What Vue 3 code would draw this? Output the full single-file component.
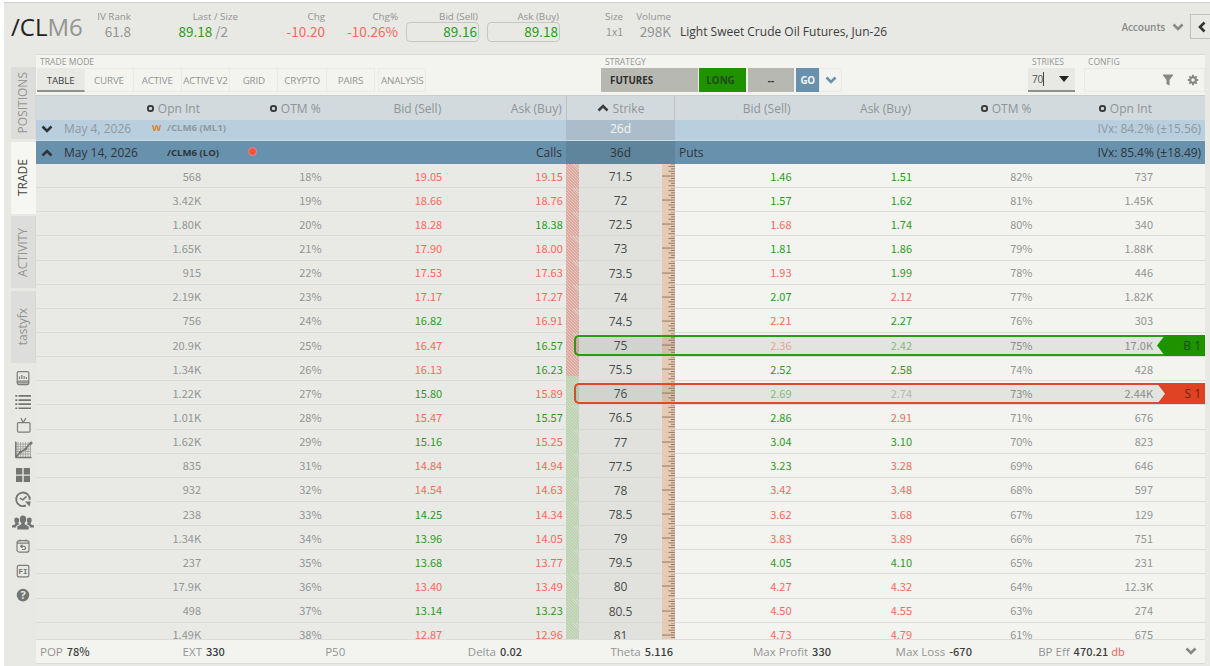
<template>
  <div class="app">
    <header class="quote-bar">
      <div class="symbol"><b>/CL</b>M6</div>
      <div v-for="q in quotes" :key="q.label" class="quote" :class="q.cls">
        <span class="quote-label">{{ q.label }}</span>
        <span class="quote-value" :class="q.tone">{{ q.value }}<i v-if="q.extra">{{ q.extra }}</i></span>
      </div>
      <div class="description">Light Sweet Crude Oil Futures, Jun-26</div>
      <div class="accounts">
        Accounts
        <svg class="chev" viewBox="0 0 12 8"><path d="M1.5 1.5L6 6l4.5-4.5" /></svg>
      </div>
      <button class="collapse">
        <svg viewBox="0 0 8 12"><path d="M6.5 1.5L2 6l4.5 4.5" /></svg>
      </button>
    </header>

    <div class="main">
      <nav class="rail">
        <div v-for="tab in railTabs" :key="tab" class="rail-tab" :class="{ active: tab === 'TRADE' }">
          <span>{{ tab }}</span>
        </div>
        <div class="rail-icons">
          <svg viewBox="0 0 24 24" class="line">
            <rect x="6.2" y="5.5" width="11.6" height="13" rx="1.5" />
            <path d="M6 15h12M6 16.8h12" />
            <path d="M8.5 12.8v-2.300M10.800 12.800V9M13.100 12.800v-3M15.400 12.800v-2" />
          </svg>
          <svg viewBox="0 0 24 24" class="solid">
            <path d="M4.300 5h2v1.700h-2zM4.300 9.100h2v1.700h-2zM4.300 13.200h2v1.700h-2zM4.300 17.300h2V19h-2zM7.500 5H20v1.700H7.500zM7.500 9.100H20v1.700H7.500zM7.500 13.200H20v1.700H7.500zM7.500 17.300H20V19H7.500z" />
          </svg>
          <svg viewBox="0 0 24 24" class="line">
            <rect x="6.500" y="8.500" width="12.500" height="9.500" rx="1" />
            <path d="M10 4l2 4.500L15 4" />
          </svg>
          <svg viewBox="0 0 24 24">
            <path class="thin" d="M7 4v15M9.500 4v15M12 4v15M14.500 4v15M17 4v15M19.500 4v15M5 6h15M5 8.500h15M5 11h15M5 13.500h15M5 16h15" />
            <path class="bold" d="M4.800 3.500v16h15.700M5.500 18.500l4-4.500 5-3 3-4L20 5" />
            <circle cx="20" cy="5" r="1.600" /><circle cx="9.500" cy="14" r="1.500" /><circle cx="14.500" cy="11" r="1.300" />
          </svg>
          <svg viewBox="0 0 24 24" class="solid">
            <path d="M5 5h6.300v6.300H5zM12.700 5H19v6.300h-6.300zM5 12.700h6.300V19H5zM12.700 12.700H19V19h-6.300z" />
          </svg>
          <svg viewBox="0 0 24 24">
            <path class="ring" d="M15 18.300A6.800 6.800 0 1 1 18.700 12.800" />
            <path class="bold" d="M8.800 11l3 1.800 3.700-3.500" />
            <path d="M14 14.500h5.700l-1.200 4.800z" />
          </svg>
          <svg viewBox="0 0 24 24" class="solid wide">
            <path d="M12 4.500c-2.200 0-3.200 1.300-3.200 3.400 0 2 .6 3.100 1.500 3.900v1.300L6.300 15.300V18.500h11.400v-3.200l-4-2.200v-1.300c.9-.8 1.500-1.900 1.500-3.900 0-2.100-1-3.400-3.200-3.400z" />
            <path d="M5.500 6.500c-1.500 0-2.200 1-2.200 2.500 0 1.400.4 2.200 1 2.800v1.400L1 14.500v2h4.200v-1.600L8.700 13l-1.500-.6v-.7c.6-.6 1-1.300 1-2.700 0-1.500-1.200-2.500-2.700-2.500z" />
            <path d="M18.500 6.500c1.500 0 2.200 1 2.200 2.500 0 1.400-.4 2.200-1 2.800v1.400l3.300 1.300v2h-4.200v-1.600L15.300 13l1.500-.6v-.7c-.6-.6-1-1.300-1-2.700 0-1.500 1.200-2.500 2.700-2.500z" />
          </svg>
          <svg viewBox="0 0 24 24" class="line">
            <rect x="6" y="5.500" width="12" height="11.500" rx="2.200" />
            <path d="M6 8h12M9 4.300v2M15 4.300v2M11.500 9.500l-2 1.700 2 1.700M9.500 11.200h3.500a1.600 1.600 0 0 1 0 3.200h-2" />
          </svg>
          <svg viewBox="0 0 24 24" class="line">
            <rect x="6.300" y="6.300" width="11.500" height="11.500" rx="1.300" />
            <text x="12.100" y="14.600" class="fi">FI</text>
          </svg>
          <svg viewBox="0 0 24 24">
            <circle cx="12" cy="12" r="6.300" />
            <text x="12" y="16" class="help">?</text>
          </svg>
        </div>
      </nav>

      <section class="panel">
        <div class="toolbar">
          <div class="group modes">
            <div class="group-label">TRADE MODE</div>
            <div class="group-body">
              <button v-for="m in modes" :key="m" class="mode" :class="{ active: m === 'TABLE', last: m === 'ANALYSIS' }">{{ m }}</button>
            </div>
          </div>
          <div class="group strategy">
            <div class="group-label">STRATEGY</div>
            <div class="group-body">
              <button class="strat futures">FUTURES</button>
              <button class="strat long">LONG</button>
              <button class="strat none">--</button>
              <button class="strat go">GO</button>
              <button class="strat more">
                <svg class="chev" viewBox="0 0 12 8"><path d="M1.5 1.5L6 6l4.5-4.5" /></svg>
              </button>
            </div>
          </div>
          <div class="group strikes">
            <div class="group-label">STRIKES</div>
            <div class="group-body select">
              <span>70</span><em class="caret"></em>
              <svg viewBox="0 0 10 6"><path d="M0 0h10L5 6z" /></svg>
            </div>
          </div>
          <div class="group config">
            <div class="group-label">CONFIG</div>
            <div class="group-body tools">
              <svg viewBox="0 0 12 12"><path d="M.5.5h11L7.5 6v5.5L4.500 10V6z" /></svg>
              <svg viewBox="0 0 14 14">
                <path d="M7 1v12M1 7h12M2.800 2.800l8.400 8.400M11.200 2.800l-8.400 8.400" class="teeth" />
                <circle cx="7" cy="7" r="3.300" class="gear" />
              </svg>
            </div>
          </div>
        </div>

        <div class="row head">
          <div class="side">
            <span><u></u>Opn Int</span><span><u></u>OTM %</span><span>Bid (Sell)</span><span>Ask (Buy)</span>
          </div>
          <div class="mid">
            <svg class="chev" viewBox="0 0 12 8"><path d="M1.5 6.5L6 2l4.5 4.5" /></svg>Strike
          </div>
          <div class="side">
            <span>Bid (Sell)</span><span>Ask (Buy)</span><span><u></u>OTM %</span><span><u></u>Opn Int</span>
          </div>
        </div>

        <div class="row expiry near">
          <div class="exp-left">
            <svg class="chev" viewBox="0 0 12 8"><path d="M1.5 1.5L6 6l4.5-4.5" /></svg>
            <span class="exp-date">May 4, 2026</span>
            <span class="exp-flag">W</span>
            <span class="exp-root">/CLM6 (ML1)</span>
          </div>
          <div class="mid">26d</div>
          <div class="exp-right"><span></span><span>IVx: 84.2% (±15.56)</span></div>
        </div>
        <div class="row expiry open">
          <div class="exp-left">
            <svg class="chev" viewBox="0 0 12 8"><path d="M1.5 6.5L6 2l4.5 4.5" /></svg>
            <span class="exp-date">May 14, 2026</span>
            <span class="exp-flag"></span>
            <span class="exp-root">/CLM6 (LO)</span>
            <span class="dot"></span>
            <span class="exp-side">Calls</span>
          </div>
          <div class="mid">36d</div>
          <div class="exp-right"><span>Puts</span><span>IVx: 85.4% (±18.49)</span></div>
        </div>

        <div class="chain">
          <div v-for="(r, i) in rows" :key="r.strike" class="row strike-row" :class="r.leg">
            <div class="side calls">
              <span>{{ r.call[0] }}</span>
              <span>{{ r.call[1] }}</span>
              <span :class="tone(r.colors[0])">{{ r.call[2] }}</span>
              <span :class="tone(r.colors[1])">{{ r.call[3] }}</span>
            </div>
            <div class="mid">
              <div class="hatch">
                <div class="itm" :class="{ part: i === 8, none: i > 8 }"></div>
                <div class="otm"></div>
              </div>
              <div class="strike">{{ r.strike }}</div>
              <svg class="ruler" viewBox="0 0 13 24.15" preserveAspectRatio="none">
                <path v-for="t in ticks" :key="t.y" :d="`M${t.x} ${t.y}H13`" />
              </svg>
            </div>
            <div class="side puts">
              <span :class="tone(r.colors[2])">{{ r.put[0] }}</span>
              <span :class="tone(r.colors[3])">{{ r.put[1] }}</span>
              <span>{{ r.put[2] }}</span>
              <span>{{ r.put[3] }}</span>
            </div>
            <div v-if="r.leg" class="leg">
              <div class="leg-tag">{{ r.leg === 'buy' ? 'B 1' : 'S 1' }}</div>
            </div>
          </div>
        </div>

        <footer class="stats">
          <div v-for="s in stats" :key="s.label" class="stat">
            {{ s.label }} <b>{{ s.value }}</b><i v-if="s.unit">{{ s.unit }}</i>
          </div>
          <svg class="chev" viewBox="0 0 12 8"><path d="M1.5 1.5L6 6l4.5-4.5" /></svg>
        </footer>
      </section>
    </div>
  </div>
</template>

<script setup>
const quotes = [
  { label: 'IV Rank', value: '61.8', cls: 'iv' },
  { label: 'Last / Size', value: '89.18', extra: '/2', cls: 'last', tone: 'up' },
  { label: 'Chg', value: '-10.20', cls: 'chg', tone: 'down' },
  { label: 'Chg%', value: '-10.26%', cls: 'pct', tone: 'down' },
  { label: 'Bid (Sell)', value: '89.16', cls: 'boxed', tone: 'up' },
  { label: 'Ask (Buy)', value: '89.18', cls: 'boxed', tone: 'up' },
  { label: 'Size', value: '1x1', cls: 'size' },
  { label: 'Volume', value: '298K', cls: 'volume' }
]

const railTabs = ['POSITIONS', 'TRADE', 'ACTIVITY', 'tastyfx']

const modes = ['TABLE', 'CURVE', 'ACTIVE', 'ACTIVE V2', 'GRID', 'CRYPTO', 'PAIRS', 'ANALYSIS']

// open int, otm, bid, ask | strike | bid, ask, otm, open int | price direction
const data = [
  ['568 18% 19.05 19.15', '71.5', '1.46 1.51 82% 737', 'dduu'],
  ['3.42K 19% 18.66 18.76', '72', '1.57 1.62 81% 1.45K', 'dduu'],
  ['1.80K 20% 18.28 18.38', '72.5', '1.68 1.74 80% 340', 'dudu'],
  ['1.65K 21% 17.90 18.00', '73', '1.81 1.86 79% 1.88K', 'dduu'],
  ['915 22% 17.53 17.63', '73.5', '1.93 1.99 78% 446', 'dddu'],
  ['2.19K 23% 17.17 17.27', '74', '2.07 2.12 77% 1.82K', 'ddud'],
  ['756 24% 16.82 16.91', '74.5', '2.21 2.27 76% 303', 'uddu'],
  ['20.9K 25% 16.47 16.57', '75', '2.36 2.42 75% 17.0K', 'dudu', 'buy'],
  ['1.34K 26% 16.13 16.23', '75.5', '2.52 2.58 74% 428', 'duuu'],
  ['1.22K 27% 15.80 15.89', '76', '2.69 2.74 73% 2.44K', 'udun', 'sell'],
  ['1.01K 28% 15.47 15.57', '76.5', '2.86 2.91 71% 676', 'duud'],
  ['1.62K 29% 15.16 15.25', '77', '3.04 3.10 70% 823', 'uduu'],
  ['835 31% 14.84 14.94', '77.5', '3.23 3.28 69% 646', 'ddud'],
  ['932 32% 14.54 14.63', '78', '3.42 3.48 68% 597', 'dddd'],
  ['238 33% 14.25 14.34', '78.5', '3.62 3.68 67% 129', 'uddd'],
  ['1.34K 34% 13.96 14.05', '79', '3.83 3.89 66% 751', 'uddd'],
  ['237 35% 13.68 13.77', '79.5', '4.05 4.10 65% 231', 'uduu'],
  ['17.9K 36% 13.40 13.49', '80', '4.27 4.32 64% 12.3K', 'dddd'],
  ['498 37% 13.14 13.23', '80.5', '4.50 4.55 63% 274', 'uudd'],
  ['1.49K 38% 12.87 12.96', '81', '4.73 4.79 61% 675', 'dddd']
]

const rows = data.map(([call, strike, put, colors, leg]) => ({
  call: call.split(' '),
  strike,
  put: put.split(' '),
  colors,
  leg
}))

const tone = (c) => ({ u: 'up', d: 'down', n: '' })[c]

const ticks = Array.from({ length: 10 }, (_, i) => ({
  y: (i * 2.415).toFixed(2),
  x: i === 5 ? 0 : i % 2 ? 6.5 : 9
}))

const stats = [
  { label: 'POP', value: '78%' },
  { label: 'EXT', value: '330' },
  { label: 'P50', value: '' },
  { label: 'Delta', value: '0.02' },
  { label: 'Theta', value: '5.116' },
  { label: 'Max Profit', value: '330' },
  { label: 'Max Loss', value: '-670' },
  { label: 'BP Eff', value: '470.21', unit: 'db' }
]
</script>

<style>
body {
  margin: 0;
  background: #ffffff;
  overflow: hidden;
}
</style>

<style scoped>
* {
  box-sizing: border-box;
}

.app {
  width: 1206px;
  height: 664px;
  margin: 2px 0 0 4px;
  background: #e8e8e4;
  border-top: 1px solid #cfcfcc;
  font-family: "Open Sans", sans-serif;
  color: #939593;
  display: flex;
  flex-direction: column;
  overflow: hidden;
}

button {
  border: 0;
  padding: 0;
  margin: 0;
  background: none;
  font: inherit;
  color: inherit;
}

b {
  font-weight: 400;
}

i {
  font-style: normal;
}

.up {
  color: #2f9a1c;
}

.down {
  color: #f8685a;
}

.chev {
  width: 12px;
  height: 8px;
  fill: none;
  stroke: currentColor;
  stroke-width: 2.6;
  flex-shrink: 0;
}

/* quote bar */
.quote-bar {
  height: 51px;
  flex-shrink: 0;
  display: flex;
  align-items: flex-start;
}

.symbol {
  width: 87px;
  padding: 7px 0 0 7px;
  font-size: 24px;
  line-height: 34px;
}

.symbol b {
  color: #222;
}

.quote {
  display: flex;
  flex-direction: column;
  align-items: flex-end;
  padding-top: 8px;
  white-space: nowrap;
}

.quote-label {
  font-size: 9.8px;
  line-height: 12px;
}

.quote-value {
  font-family: "Noto Sans CJK SC", sans-serif;
  font-size: 13.5px;
  line-height: 17px;
  height: 20px;
}

.quote-value i {
  color: #939593;
  margin-left: 3px;
}

.iv {
  width: 40px;
}

.last {
  width: 107px;
}

.last .quote-value {
  padding-right: 10px;
}

.chg {
  width: 87px;
}

.pct {
  width: 73px;
}

.boxed {
  width: 73px;
  margin-left: 8px;
}

.boxed .quote-label {
  padding-right: 1px;
}

.boxed .quote-value {
  width: 73px;
  padding-right: 1px;
  text-align: right;
  border: 1px solid #c6c7c3;
  border-radius: 4px;
  margin-top: -1px;
}

.size {
  width: 63px;
}

.size .quote-value {
  font-size: 10.5px;
}

.volume {
  width: 48px;
}

.description {
  margin-left: 9px;
  padding-top: 20px;
  font-size: 12px;
  line-height: 18px;
  color: #3c3e3d;
  flex: 1;
}

.accounts {
  display: flex;
  align-items: center;
  gap: 7px;
  padding-top: 15px;
  font-family: "Noto Sans CJK SC", sans-serif;
  font-weight: 500;
  font-size: 10.2px;
  letter-spacing: -0.1px;
  line-height: 18px;
  color: #888a88;
}

.collapse {
  width: 20px;
  height: 25px;
  margin-top: 11px;
  margin-left: 6px;
  border: 1px solid #c0c1bd;
  border-right: 0;
  display: flex;
  align-items: center;
  justify-content: flex-end;
}

.collapse svg {
  width: 8px;
  height: 12px;
  margin-right: 4px;
  fill: none;
  stroke: #333;
  stroke-width: 2.6;
}

.main {
  display: flex;
  height: 612px;
}

/* left rail */
.rail {
  width: 32px;
  padding: 13px 0 0 7px;
  flex-shrink: 0;
}

.rail-tab {
  height: 72px;
  margin-bottom: 2.7px;
  background: #dddedb;
  display: flex;
  align-items: center;
  justify-content: center;
  border-right: 1px solid #d8d9d6;
}

.rail-tab span {
  writing-mode: vertical-rl;
  transform: rotate(180deg);
  font-size: 12px;
  line-height: 16px;
  white-space: nowrap;
}

.rail-tab.active {
  background: #f6f7f3;
  color: #444;
  border-right-color: #f6f7f3;
}

.rail-icons {
  display: flex;
  flex-direction: column;
  align-items: center;
  margin: 0 2px 0 0;
}

.rail-icons svg {
  width: 24px;
  height: 24.2px;
  fill: #737572;
  flex-shrink: 0;
}

.rail-icons .line {
  fill: none;
  stroke: #7c7e7b;
  stroke-width: 1.2;
}

.rail-icons path {
  stroke-linejoin: round;
}

.thin {
  fill: none;
  stroke: #9a9b98;
  stroke-width: 0.8;
}

.bold {
  fill: none;
  stroke: #737572;
  stroke-width: 1.5;
}

.ring {
  fill: none;
  stroke: #737572;
  stroke-width: 1.8;
}

.fi {
  fill: #737572;
  stroke: none;
  font-family: "Liberation Mono", monospace;
  font-weight: 700;
  font-size: 7.5px;
  text-anchor: middle;
}

.help {
  fill: #e8e8e4;
  font-weight: 700;
  font-size: 11px;
  text-anchor: middle;
}

/* panel */
.panel {
  width: 1169px;
  flex-shrink: 0;
  display: flex;
  flex-direction: column;
}

.toolbar {
  height: 42px;
  display: flex;
  background: #f3f4f0;
  border-top: 1px solid #dadbd8;
  border-bottom: 1px solid #c9cdcc;
}

.group-label {
  height: 13px;
  padding-left: 4px;
  font-size: 8.6px;
  line-height: 14px;
  white-space: nowrap;
}

.group-body {
  display: flex;
  height: 24px;
}

.modes {
  width: 565px;
}

.modes .group-body {
  padding-left: 1px;
}

.mode {
  width: 48.3px;
  padding-top: 1px;
  font-size: 9.8px;
  letter-spacing: -0.15px;
  border: 1px solid #e9eae7;
  border-left: 0;
  white-space: nowrap;
}

.mode.active {
  padding-top: 2px;
  background: #e8e8e4;
  color: #3c3e3d;
  border-bottom: 2px solid #8e908e;
}

.mode.last {
  margin-left: 3px;
  border-left: 1px solid #e9eae7;
}

.strategy {
  width: 427px;
}

.strat {
  font-size: 9.8px;
  font-weight: 700;
  color: #2e302f;
  background: #b7b8b2;
}

.futures {
  width: 97px;
  padding-left: 9px;
  text-align: left;
}

.long {
  width: 47px;
  margin-left: 1px;
  padding-right: 4px;
  background: #1f9200;
  color: #1f4a17;
}

.none {
  width: 46px;
  margin-left: 2px;
}

.go {
  width: 23px;
  margin-left: 2px;
  background: #6891ae;
  color: #f3f4f0;
  letter-spacing: -0.5px;
}

.more {
  width: 23px;
  background: none;
  border: 1px solid #e9eae7;
  color: #6891ae;
}

.more svg {
  display: block;
  margin: 0 auto;
}

.strikes {
  width: 56px;
}

.select {
  width: 47px;
  background: #e8e8e4;
  border-bottom: 2px solid #8e908e;
  align-items: center;
  padding-left: 4px;
  font-size: 10px;
  letter-spacing: -0.3px;
  color: #555;
}

.select svg {
  width: 10px;
  height: 6px;
  margin-left: 15px;
  fill: #222;
}

.caret {
  width: 1px;
  height: 14px;
  background: #444;
}

.config {
  width: 121px;
}

.tools {
  border: 1px solid #e9eae7;
  align-items: center;
  justify-content: flex-end;
  gap: 13px;
  padding-right: 5px;
  fill: #858785;
}

.tools svg {
  width: 12px;
  height: 12px;
}

.teeth {
  stroke: #858785;
  stroke-width: 2.2;
}

.gear {
  fill: #f3f4f0;
  stroke: #858785;
  stroke-width: 2.4;
}

/* option chain */
.row {
  display: flex;
  position: relative;
  flex-shrink: 0;
}

.side {
  width: 530px;
  display: grid;
  grid-template-columns: 165px 120.6px 120.6px 120.6px;
  text-align: right;
  align-items: center;
}

.mid {
  width: 109px;
  display: flex;
  align-items: center;
  justify-content: center;
}

.mid + .side {
  grid-template-columns: 116.5px 120.5px 120.5px 120.5px;
}

.head {
  height: 24px;
  font-size: 12px;
  background: #d2dadd;
}

.head .side {
  color: #8f9595;
}

.head .side span {
  padding-right: 1px;
}

.head .mid {
  gap: 4px;
  border-left: 1px solid #bcc1c2;
  border-right: 1px solid #bcc1c2;
}

.head .mid svg {
  color: #3c3e3d;
}

.head u {
  display: inline-block;
  width: 7px;
  height: 7px;
  border: 2px solid #3c3e3d;
  border-radius: 3px;
  margin-right: 4px;
  vertical-align: 1px;
}

.expiry {
  font-size: 12px;
}

.near {
  height: 20px;
  padding-bottom: 2px;
  background: linear-gradient(90deg, #b9cfde 530px, #abbdcb 530px 639px, #b9cfde 639px);
  color: #8f999f;
  line-height: 16px;
}

.near .mid {
  color: #f3f4f0;
}

.near .exp-flag,
.near .exp-root {
  margin-top: -2px;
}

.open {
  height: 24px;
  background: #6891ae;
  color: #2e3539;
  border-top: 1px solid #cfdbe2;
}

.open .mid {
  background: #5e859c;
}

.exp-left {
  width: 530px;
  display: flex;
  align-items: center;
  padding: 0 4px;
}

.exp-left .chev {
  color: #2e3539;
  margin: 0 11px 0 1px;
}

.exp-date {
  width: 88px;
  white-space: nowrap;
}

.exp-flag {
  width: 15px;
  font-size: 9.5px;
  font-weight: 700;
  color: #dc822d;
}

.exp-root {
  width: 81px;
  font-size: 9.6px;
  font-weight: 700;
  white-space: nowrap;
}

.open .exp-root {
  margin-top: -1px;
}

.dot {
  width: 9px;
  height: 9px;
  margin-top: -2px;
  border-radius: 50%;
  background: #fb5240;
  border: 1px solid #d98f88;
}

.exp-side {
  margin-left: auto;
}

.exp-right {
  width: 530px;
  padding: 0 4px;
  display: flex;
  align-items: center;
  justify-content: space-between;
}

.exp-right span:last-child {
  letter-spacing: -0.05px;
}

.chain {
  height: 475px;
  overflow: hidden;
}

.strike-row {
  height: 24.15px;
}

.strike-row .side {
  font-family: "Noto Sans CJK SC", sans-serif;
  font-size: 11px;
  line-height: 16px;
  border-bottom: 1px solid #dcddda;
}

.calls {
  background: #e9eae6;
}

.puts {
  background: #f3f4f0;
}

.strike-row .mid {
  background: #e1e2de;
  justify-content: space-between;
  align-items: stretch;
}

.strike {
  flex: 1;
  padding-top: 1px;
  font-size: 12px;
  line-height: 24px;
  height: 24.15px;
  text-align: center;
  color: #4a4c4b;
  border-bottom: 1px solid #d8d9d6;
}

.hatch {
  width: 13px;
  display: flex;
  flex-direction: column;
}

.itm {
  height: 100%;
  flex-shrink: 0;
  background: repeating-linear-gradient(45deg, #e2a79c 0 0.9px, #dccbc4 0.9px 2.1px);
}

.itm.part {
  height: 80%;
}

.itm.none {
  height: 0;
}

.otm {
  flex: 1;
  background: repeating-linear-gradient(45deg, #bdd2b1 0 0.9px, #d0dcc7 0.9px 2.1px);
}

.ruler {
  width: 13px;
  height: 24.15px;
  background: #e5cab4;
  stroke: #957b69;
  stroke-width: 1;
}

.leg {
  position: absolute;
  left: 538px;
  right: 0;
  top: 2px;
  height: 21px;
  border: 2px solid #2b9a14;
  border-right: 0;
  border-radius: 5px 0 0 5px;
  background: rgba(60, 62, 58, 0.09);
}

.leg-tag {
  position: absolute;
  right: 0;
  top: -2px;
  width: 48px;
  height: 21px;
  padding-right: 4px;
  font-size: 12px;
  line-height: 22px;
  text-align: right;
  color: #17500d;
  background: #1f9200;
  clip-path: polygon(0 50%, 8px 0, 100% 0, 100% 100%, 8px 100%);
}

.sell .leg {
  border-color: #dc4b30;
}

.sell .leg-tag {
  color: #6a2417;
  background: #e04324;
  clip-path: polygon(0 0, 100% 0, 100% 100%, 0 100%, 8px 50%);
}

.buy .puts .up,
.buy .puts .down,
.sell .puts .up,
.sell .puts span:nth-child(2) {
  opacity: 0.5;
}

/* stats footer */
.stats {
  height: 25px;
  display: flex;
  align-items: center;
  padding: 0 0 2px 4px;
  background: #f3f4f0;
  border-top: 1px solid #dcddda;
  border-bottom: 1px solid #dcddda;
  font-size: 11.5px;
}

.stat {
  width: 142.6px;
  flex-shrink: 0;
  white-space: nowrap;
}

.stat b {
  font-family: "Noto Sans CJK SC", sans-serif;
  font-weight: 500;
  font-size: 11px;
  line-height: 16px;
  color: #3c3e3d;
  margin-left: 1px;
}

.stat i {
  font-family: "Noto Sans CJK SC", sans-serif;
  font-size: 11px;
  color: #f8685a;
  margin-left: 3px;
}

.stats .chev {
  color: #858785;
  margin-left: 4px;
}
</style>
